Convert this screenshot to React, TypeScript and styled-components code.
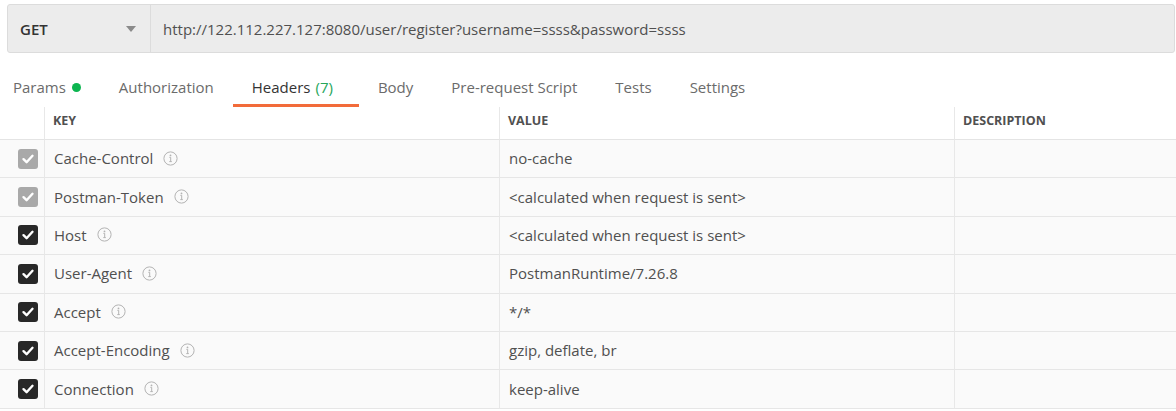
import React from "react";
import styled, { createGlobalStyle } from "styled-components";

const GlobalStyle = createGlobalStyle`
  html, body { margin: 0; padding: 0; background: #ffffff; }
  body { font-family: "Open Sans", "Noto Sans", sans-serif; color: #505050; }
  * { box-sizing: border-box; }
`;

const Page = styled.div`
  width: 1176px;
  height: 411px;
  overflow: hidden;
  background: #ffffff;
`;

const UrlBar = styled.div`
  display: flex;
  height: 49px;
  margin: 4px 1px 0 7px;
  background: #ececec;
  border: 1px solid #dcdcdc;
  border-radius: 3px;
`;

const Method = styled.div`
  width: 143px;
  flex: none;
  display: flex;
  align-items: center;
  justify-content: space-between;
  padding: 0 14px 0 12px;
  border-right: 1px solid #dcdcdc;
  font-size: 15px;
  font-weight: 600;
  color: #333333;
`;

const Caret = styled.span`
  width: 0;
  height: 0;
  border-left: 5px solid transparent;
  border-right: 5px solid transparent;
  border-top: 6px solid #8a8a8a;
`;

const UrlText = styled.div`
  display: flex;
  align-items: center;
  padding-left: 12px;
  font-size: 15px;
  color: #505050;
`;

const TabBar = styled.div`
  display: flex;
  align-items: flex-end;
  height: 54px;
`;

const Tab = styled.div<{ $active?: boolean }>`
  height: 36px;
  display: flex;
  align-items: center;
  padding: 0 19px 1px;
  font-size: 15px;
  color: ${(p) => (p.$active ? "#333333" : "#6b6b6b")};
  border-bottom: 3px solid ${(p) => (p.$active ? "#f26b3a" : "transparent")};
  &:first-child { padding-left: 13px; }
`;

const Count = styled.span`
  color: #26a65b;
  margin-left: 5px;
  margin-right: 7px;
`;

const Dot = styled.span`
  width: 9px;
  height: 9px;
  border-radius: 50%;
  background: #0cb550;
  margin-left: 6px;
`;

const Grid = styled.div`
  display: grid;
  grid-template-columns: 45px 455px 455px 1fr;
`;

const HeadCell = styled.div`
  height: 33px;
  display: flex;
  align-items: center;
  padding: 0 0 5px 8px;
  font-size: 12.5px;
  font-weight: 700;
  color: #505050;
  border-bottom: 1px solid #e4e4e4;
  border-right: 1px solid #e8e8e8;
  &:nth-child(4n) { border-right: none; }
`;

const Cell = styled.div`
  height: 38.4px;
  display: flex;
  align-items: center;
  padding: 0 0 1px 9px;
  font-size: 15px;
  color: #505050;
  background: #fafafa;
  border-bottom: 1px solid #e6e6e6;
  border-right: 1px solid #e8e8e8;
  &:nth-child(4n) { border-right: none; }
`;

const CheckCell = styled(Cell)`
  padding: 0 0 0 18px;
`;

const Box = styled.span<{ $muted?: boolean }>`
  width: 20px;
  height: 20px;
  border-radius: 3px;
  background: ${(p) => (p.$muted ? "#a9a9a9" : "#282828")};
  display: flex;
  align-items: center;
  justify-content: center;
`;

const InfoWrap = styled.span`
  display: inline-flex;
  margin-left: 10px;
`;

const Check = () => (
  <svg width="14" height="14" viewBox="0 0 14 14">
    <path d="M2.5 7.2 L5.6 10.2 L11.5 3.8" fill="none" stroke="#ffffff" strokeWidth="2.4" strokeLinecap="round" strokeLinejoin="round" />
  </svg>
);

const Info = () => (
  <InfoWrap>
    <svg width="15" height="15" viewBox="0 0 15 15">
      <circle cx="7.5" cy="7.5" r="6.6" fill="none" stroke="#b3b3b3" strokeWidth="1" />
      <circle cx="7.5" cy="4.4" r="0.9" fill="#b3b3b3" />
      <path d="M6.4 6.4 H7.7 V10.6 M6.3 10.6 H8.8" fill="none" stroke="#b3b3b3" strokeWidth="1" />
    </svg>
  </InfoWrap>
);

const rows = [
  { key: "Cache-Control", value: "no-cache", muted: true },
  { key: "Postman-Token", value: "<calculated when request is sent>", muted: true },
  { key: "Host", value: "<calculated when request is sent>", muted: false },
  { key: "User-Agent", value: "PostmanRuntime/7.26.8", muted: false },
  { key: "Accept", value: "*/*", muted: false },
  { key: "Accept-Encoding", value: "gzip, deflate, br", muted: false },
  { key: "Connection", value: "keep-alive", muted: false },
];

export default function App() {
  return (
    <Page>
      <GlobalStyle />
      <UrlBar>
        <Method>
          GET
          <Caret />
        </Method>
        <UrlText>http://122.112.227.127:8080/user/register?username=ssss&amp;password=ssss</UrlText>
      </UrlBar>
      <TabBar>
        <Tab>
          Params
          <Dot />
        </Tab>
        <Tab>Authorization</Tab>
        <Tab $active>
          Headers<Count>(7)</Count>
        </Tab>
        <Tab>Body</Tab>
        <Tab>Pre-request Script</Tab>
        <Tab>Tests</Tab>
        <Tab>Settings</Tab>
      </TabBar>
      <Grid>
        <HeadCell />
        <HeadCell>KEY</HeadCell>
        <HeadCell>VALUE</HeadCell>
        <HeadCell>DESCRIPTION</HeadCell>
        {rows.map((r) => (
          <React.Fragment key={r.key}>
            <CheckCell>
              <Box $muted={r.muted}>
                <Check />
              </Box>
            </CheckCell>
            <Cell>
              {r.key}
              <Info />
            </Cell>
            <Cell>{r.value}</Cell>
            <Cell />
          </React.Fragment>
        ))}
      </Grid>
    </Page>
  );
}
